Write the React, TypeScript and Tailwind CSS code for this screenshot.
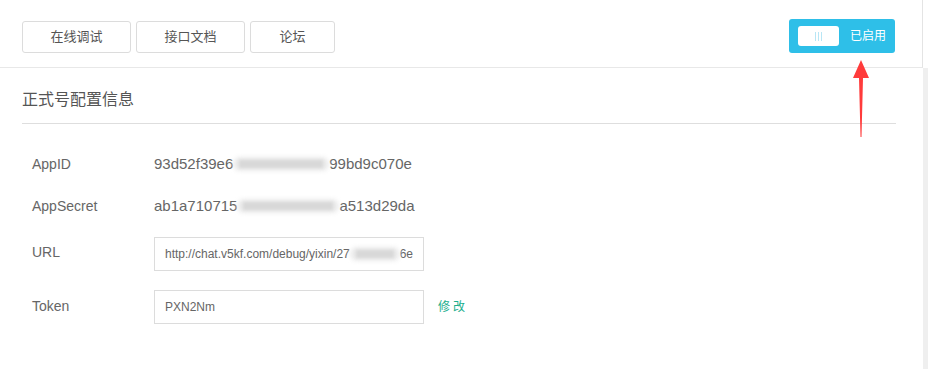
import React from "react";

const font = { fontFamily: '"Liberation Sans", "Noto Sans CJK SC", sans-serif' };

function Blur({ w }: { w: number }) {
  return (
    <span className="relative inline-block h-[16px] align-middle" style={{ width: w }}>
      <span className="absolute inset-x-0 top-[1px] bottom-[1px] rounded-full bg-[#ebebeb] blur-[2px]" />
      <span className="absolute inset-x-[6px] top-[4px] bottom-[4px] bg-[#d8d8d8] blur-[1.5px]" />
    </span>
  );
}

export default function App() {
  return (
    <div className="w-[928px] h-[369px] bg-white overflow-hidden flex text-[#555]" style={font}>
      <div className="flex-1 flex flex-col">
        <div className="h-[68px] shrink-0 border-b border-[#e8e8e8] border-r border-r-[#e4e4e4] flex items-start justify-between pl-[22px] pr-[27px]">
          <div className="flex gap-[5px] mt-[21px]">
            <button className="w-[109px] h-[32px] border border-[#dcdcdc] rounded-[3px] text-[13px] text-[#555]">在线调试</button>
            <button className="w-[109px] h-[32px] border border-[#dcdcdc] rounded-[3px] text-[13px] text-[#555]">接口文档</button>
            <button className="w-[85px] h-[32px] border border-[#dcdcdc] rounded-[3px] text-[13px] text-[#555]">论坛</button>
          </div>
          <div className="relative mt-[19px]">
            <div className="w-[106px] h-[34px] rounded-[3px] bg-[#2ebfe8] flex items-center pl-[9px] gap-[11px]">
              <div className="w-[41px] h-[20px] bg-white rounded-[3px] flex items-center justify-center gap-[2px]">
                <span className="w-[1px] h-[9px] bg-[#b8e6f5]" />
                <span className="w-[1px] h-[9px] bg-[#b8e6f5]" />
                <span className="w-[1px] h-[9px] bg-[#b8e6f5]" />
              </div>
              <span className="text-white text-[12px]">已启用</span>
            </div>
            <svg className="absolute left-[63px] top-[41px]" width="18" height="78" viewBox="0 0 18 78">
              <polygon points="9,0 17,18 11,18 9.5,77 8.5,77 7,18 1,18" fill="#ff3b3b" />
            </svg>
          </div>
        </div>
        <div className="px-[22px] pr-[27px]">
          <div className="h-[56px] border-b border-[#dedede] flex items-center pt-[9px] text-[16px] text-[#555]">
            正式号配置信息
          </div>
          <div className="pl-[10px] pt-[19px]">
            <div className="flex items-center h-[42px]">
              <span className="w-[122px] text-[14px] text-[#666]">AppID</span>
              <span className="text-[15px] text-[#666] flex items-center">93d52f39e6<Blur w={96} />99bd9c070e</span>
            </div>
            <div className="flex items-center h-[42px]">
              <span className="w-[122px] text-[14px] text-[#666]">AppSecret</span>
              <span className="text-[15px] text-[#666] flex items-center">ab1a710715<Blur w={102} />a513d29da</span>
            </div>
            <div className="flex items-center h-[34px] mt-[10px]">
              <span className="w-[122px] text-[14px] text-[#666] -mt-[3px]">URL</span>
              <div className="w-[270px] h-[34px] border border-[#dcdcdc] flex items-center px-[10px] text-[12px] text-[#666] whitespace-nowrap overflow-hidden">
                http://chat.v5kf.com/debug/yixin/27<Blur w={52} />6e
              </div>
            </div>
            <div className="flex items-center h-[34px] mt-[19px]">
              <span className="w-[122px] text-[14px] text-[#666] -mt-[2px]">Token</span>
              <div className="w-[270px] h-[34px] border border-[#dcdcdc] flex items-center px-[10px] text-[12px] text-[#666]">
                PXN2Nm
              </div>
              <span className="ml-[14px] text-[12px] text-[#1aae8c] tracking-[3px]">修改</span>
            </div>
          </div>
        </div>
      </div>
      <div className="w-[5px] flex flex-col">
        <div className="h-[68px] bg-white" />
        <div className="flex-1 bg-[#efefef]" />
      </div>
    </div>
  );
}
